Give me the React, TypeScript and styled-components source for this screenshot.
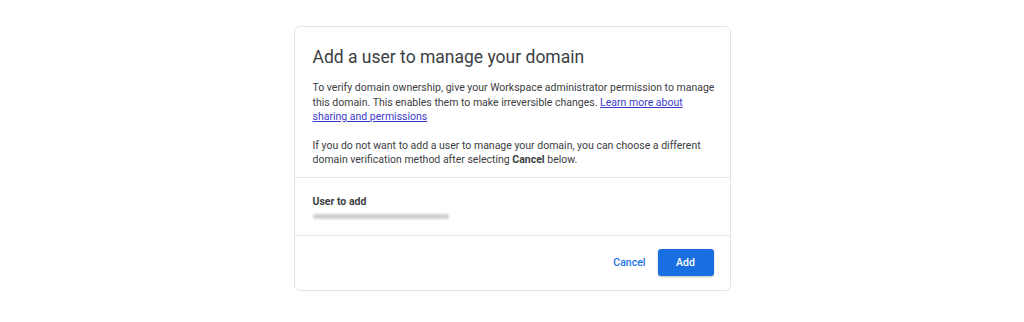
import React from "react";
import styled, { createGlobalStyle } from "styled-components";

const Global = createGlobalStyle`
  html, body { margin: 0; padding: 0; background: #ffffff; }
  body { font-family: Roboto, "Liberation Sans", Arial, sans-serif; }
`;

const Page = styled.div`
  width: 1024px;
  height: 322px;
  display: flex;
  justify-content: center;
  padding-top: 26px;
  box-sizing: border-box;
`;

const Card = styled.div`
  width: 437px;
  height: 265px;
  box-sizing: border-box;
  border: 1px solid #e3e3e3;
  border-radius: 6px;
  display: flex;
  flex-direction: column;
`;

const Section = styled.div<{ $h: number; $border?: boolean }>`
  height: ${(p) => p.$h}px;
  box-sizing: border-box;
  padding: 0 10px 0 18px;
  border-bottom: ${(p) => (p.$border ? "1px solid #e6e6e6" : "none")};
`;

const Title = styled.h1`
  margin: 0;
  padding-top: 17px;
  font-family: Roboto, sans-serif;
  font-weight: 400;
  font-size: 17.5px;
  line-height: 26px;
  color: #3c4043;
`;

const Para = styled.p`
  margin: 0;
  font-size: 10.5px;
  line-height: 14.5px;
  color: #3c4043;
  & + & { margin-top: 14px; }
`;

const Body = styled.div`
  padding-top: 11px;
`;

const Link = styled.a`
  color: #3b39c9;
  text-decoration: underline;
`;

const Label = styled.div`
  padding-top: 17px;
  font-size: 10.5px;
  font-weight: 700;
  line-height: 14px;
  color: #3c4043;
`;

const Blurred = styled.div`
  margin-top: 5px;
  width: 136px;
  height: 5px;
  border-radius: 3px;
  background: #cfcfcf;
  filter: blur(1px);
`;

const Footer = styled.div`
  flex: 1;
  display: flex;
  justify-content: flex-end;
  align-items: center;
  gap: 12px;
  padding: 0 16px 2px 0;
`;

const TextButton = styled.button`
  border: none;
  background: transparent;
  color: #1a73e8;
  font-family: Roboto, sans-serif;
  font-size: 10.5px;
  font-weight: 500;
  padding: 0;
`;

const Primary = styled.button`
  border: none;
  background: #1a6fe0;
  color: #ffffff;
  font-family: Roboto, sans-serif;
  font-size: 10.5px;
  font-weight: 500;
  width: 56px;
  height: 27px;
  border-radius: 3px;
  box-shadow: 0 1px 2px rgba(0, 0, 0, 0.25);
`;

export default function App() {
  return (
    <>
      <Global />
      <Page>
        <Card>
          <Section $h={151} $border>
            <Title>Add a user to manage your domain</Title>
            <Body>
              <Para>
                To verify domain ownership, give your Workspace administrator permission to manage
                this domain. This enables them to make irreversible changes.{" "}
                <Link href="#">Learn more about sharing and permissions</Link>
              </Para>
              <Para>
                If you do not want to add a user to manage your domain, you can choose a different
                domain verification method after selecting <b>Cancel</b> below.
              </Para>
            </Body>
          </Section>
          <Section $h={58} $border>
            <Label>User to add</Label>
            <Blurred />
          </Section>
          <Footer>
            <TextButton>Cancel</TextButton>
            <Primary>Add</Primary>
          </Footer>
        </Card>
      </Page>
    </>
  );
}
